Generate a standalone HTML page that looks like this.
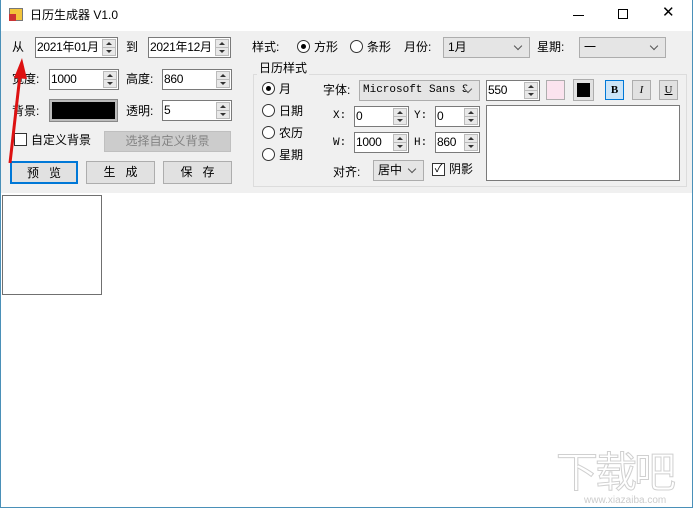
<!DOCTYPE html><html><head><meta charset="utf-8"><style>
*{box-sizing:border-box;margin:0;padding:0}
body{width:693px;height:508px;position:relative;overflow:hidden;background:#fff;font-family:"Liberation Sans","Noto Sans CJK SC",sans-serif;font-size:12px;color:#000}
.a{position:absolute}
.t{position:absolute;white-space:nowrap;line-height:14px}
.sp{position:absolute;background:#fff;border:1px solid #7a7a7a;height:21px;padding:2px 0 0 1px;font-size:12px;line-height:15px;overflow:hidden;white-space:nowrap;letter-spacing:-0.3px}
.sp i{position:absolute;right:1px;top:1px;width:14px;height:17px;background:#e8e8e8;border:1px solid #bbb}
.sp i:before{content:"";position:absolute;left:3px;top:2px;border:3px solid transparent;border-bottom:3px solid #333;border-top:0}
.sp i:after{content:"";position:absolute;left:3px;bottom:2px;border:3px solid transparent;border-top:3px solid #333;border-bottom:0}
.sp i b{position:absolute;left:0;right:0;top:7px;height:1px;background:#bbb}
.cb{position:absolute;background:#e5e5e5;border:1px solid #adadad;height:21px;padding:2px 0 0 4px;line-height:15px;overflow:hidden;white-space:nowrap}
.cb:after{content:"";position:absolute;right:8px;top:5px;width:5px;height:5px;border-right:1px solid #555;border-bottom:1px solid #555;transform:rotate(45deg);background:#e5e5e5}
.btn{position:absolute;background:#e1e1e1;border:1px solid #adadad;text-align:center;line-height:20px;letter-spacing:10px;padding-left:10px}
.r{position:absolute;width:13px;height:13px;border:1px solid #333;border-radius:50%;background:#fff}
.r.on:after{content:"";position:absolute;left:3px;top:3px;width:5px;height:5px;border-radius:50%;background:#000}
.sq{position:absolute;width:19px;height:20px;border:1px solid #adadad;background:#e1e1e1}
</style></head><body>
<div class="a" style="left:0;top:0;width:693px;height:31px;background:#fff"></div>
<div class="a" style="left:9px;top:8px;width:14px;height:13px;background:#f3c43b;border:1px solid #777"></div>
<div class="a" style="left:9px;top:14px;width:7px;height:7px;background:#c33"></div>
<div class="t" style="left:30px;top:8px;font-size:12px">日历生成器 V1.0</div>
<div class="a" style="left:573px;top:15px;width:11px;height:1px;background:#000"></div>
<div class="a" style="left:618px;top:9px;width:10px;height:10px;border:1px solid #000"></div>
<div class="t" style="left:662px;top:6px;font-size:15px;font-weight:lighter">✕</div>
<div class="a" style="left:0;top:31px;width:693px;height:162px;background:#f0f0f0"></div>
<div class="a" style="left:0;top:0;width:1px;height:508px;background:#4a90b8"></div>
<div class="a" style="left:692px;top:0;width:1px;height:508px;background:#4a90b8"></div>
<div class="a" style="left:0;top:507px;width:693px;height:1px;background:#4a90b8"></div>

<div class="t" style="left:12px;top:40px">从</div>
<div class="sp" style="left:35px;top:37px;width:83px">2021年01月<i><b></b></i></div>
<div class="t" style="left:126px;top:40px">到</div>
<div class="sp" style="left:148px;top:37px;width:83px">2021年12月<i><b></b></i></div>
<div class="t" style="left:12px;top:72px">宽度:</div>
<div class="sp" style="left:49px;top:69px;width:70px">1000<i><b></b></i></div>
<div class="t" style="left:126px;top:72px">高度:</div>
<div class="sp" style="left:162px;top:69px;width:70px">860<i><b></b></i></div>
<div class="t" style="left:12px;top:104px">背景:</div>
<div class="a" style="left:50px;top:100px;width:67px;height:21px;border:2px solid #bbb;background:#000;outline:1px solid #888"></div>
<div class="t" style="left:126px;top:104px">透明:</div>
<div class="sp" style="left:162px;top:100px;width:70px">5<i><b></b></i></div>
<div class="a" style="left:14px;top:133px;width:13px;height:13px;border:1px solid #333;background:#fff"></div>
<div class="t" style="left:31px;top:133px">自定义背景</div>
<div class="a" style="left:104px;top:131px;width:127px;height:21px;background:#ccc;border:1px solid #bfbfbf;color:#838383;text-align:center;line-height:19px">选择自定义背景</div>
<div class="btn" style="left:10px;top:161px;width:68px;height:23px;border:2px solid #0078d7">预览</div>
<div class="btn" style="left:86px;top:161px;width:69px;height:23px">生成</div>
<div class="btn" style="left:163px;top:161px;width:69px;height:23px">保存</div>

<div class="t" style="left:252px;top:40px">样式:</div>
<div class="r on" style="left:297px;top:40px"></div>
<div class="t" style="left:314px;top:40px">方形</div>
<div class="r" style="left:350px;top:40px"></div>
<div class="t" style="left:367px;top:40px">条形</div>
<div class="t" style="left:404px;top:40px">月份:</div>
<div class="cb" style="left:443px;top:37px;width:87px">1月</div>
<div class="t" style="left:537px;top:40px">星期:</div>
<div class="cb" style="left:579px;top:37px;width:87px">一</div>

<div class="a" style="left:253px;top:74px;width:434px;height:113px;border:1px solid #dcdcdc"></div>
<div class="t" style="left:257px;top:61px;background:#f0f0f0;padding:0 2px">日历样式</div>
<div class="r on" style="left:262px;top:82px"></div><div class="t" style="left:279px;top:82px">月</div>
<div class="r" style="left:262px;top:104px"></div><div class="t" style="left:279px;top:104px">日期</div>
<div class="r" style="left:262px;top:126px"></div><div class="t" style="left:279px;top:126px">农历</div>
<div class="r" style="left:262px;top:148px"></div><div class="t" style="left:279px;top:148px">星期</div>
<div class="t" style="left:323px;top:83px">字体:</div>
<div class="cb" style="left:359px;top:80px;width:121px;font-family:'Liberation Mono',monospace;font-size:11px;padding-left:3px">Microsoft Sans S</div>
<div class="sp" style="left:486px;top:80px;width:54px">550<i><b></b></i></div>
<div class="sq" style="left:546px;top:80px;background:#fbe3ee"></div>
<div class="sq" style="left:574px;top:80px;background:#000;border:3px solid #e1e1e1;outline:1px solid #adadad"></div>
<div class="sq" style="left:605px;top:80px;background:#cce4f7;border-color:#0078d7;text-align:center;font-family:'Liberation Serif',serif;font-weight:bold;line-height:18px;font-size:11px">B</div>
<div class="sq" style="left:632px;top:80px;text-align:center;font-family:'Liberation Serif',serif;font-style:italic;line-height:18px;font-size:11px">I</div>
<div class="sq" style="left:659px;top:80px;text-align:center;font-family:'Liberation Serif',serif;text-decoration:underline;line-height:18px;font-size:11px">U</div>
<div class="t" style="left:333px;top:109px;font-family:'Liberation Mono',monospace;font-size:11px">X:</div>
<div class="sp" style="left:354px;top:106px;width:55px">0<i><b></b></i></div>
<div class="t" style="left:414px;top:109px;font-family:'Liberation Mono',monospace;font-size:11px">Y:</div>
<div class="sp" style="left:435px;top:106px;width:45px">0<i><b></b></i></div>
<div class="t" style="left:333px;top:136px;font-family:'Liberation Mono',monospace;font-size:11px">W:</div>
<div class="sp" style="left:354px;top:132px;width:55px">1000<i><b></b></i></div>
<div class="t" style="left:414px;top:136px;font-family:'Liberation Mono',monospace;font-size:11px">H:</div>
<div class="sp" style="left:435px;top:132px;width:45px">860<i><b></b></i></div>
<div class="a" style="left:486px;top:105px;width:194px;height:76px;background:#fff;border:1px solid #7a7a7a"></div>
<div class="t" style="left:333px;top:165px">对齐:</div>
<div class="cb" style="left:373px;top:160px;width:51px">居中</div>
<div class="a" style="left:432px;top:163px;width:13px;height:13px;border:1px solid #333;background:#fff;font-size:11px;line-height:11px;text-align:center">✓</div>
<div class="t" style="left:449px;top:162px">阴影</div>

<div class="a" style="left:2px;top:195px;width:100px;height:100px;border:1px solid #707070;background:#fff"></div>
<svg class="a" style="left:0;top:50px" width="40" height="120"><line x1="10" y1="113" x2="20" y2="25" stroke="#d11" stroke-width="3"/><polygon points="22,8 14,28 27,29" fill="#d11"/></svg>
<div class="t" style="left:556px;top:452px;font-size:42px;line-height:42px;color:#fff;-webkit-text-stroke:1px #d0d0d0;letter-spacing:-3px">下载吧</div>
<div class="t" style="left:584px;top:494px;font-size:10px;color:#ccc">www.xiazaiba.com</div>
</body></html>
